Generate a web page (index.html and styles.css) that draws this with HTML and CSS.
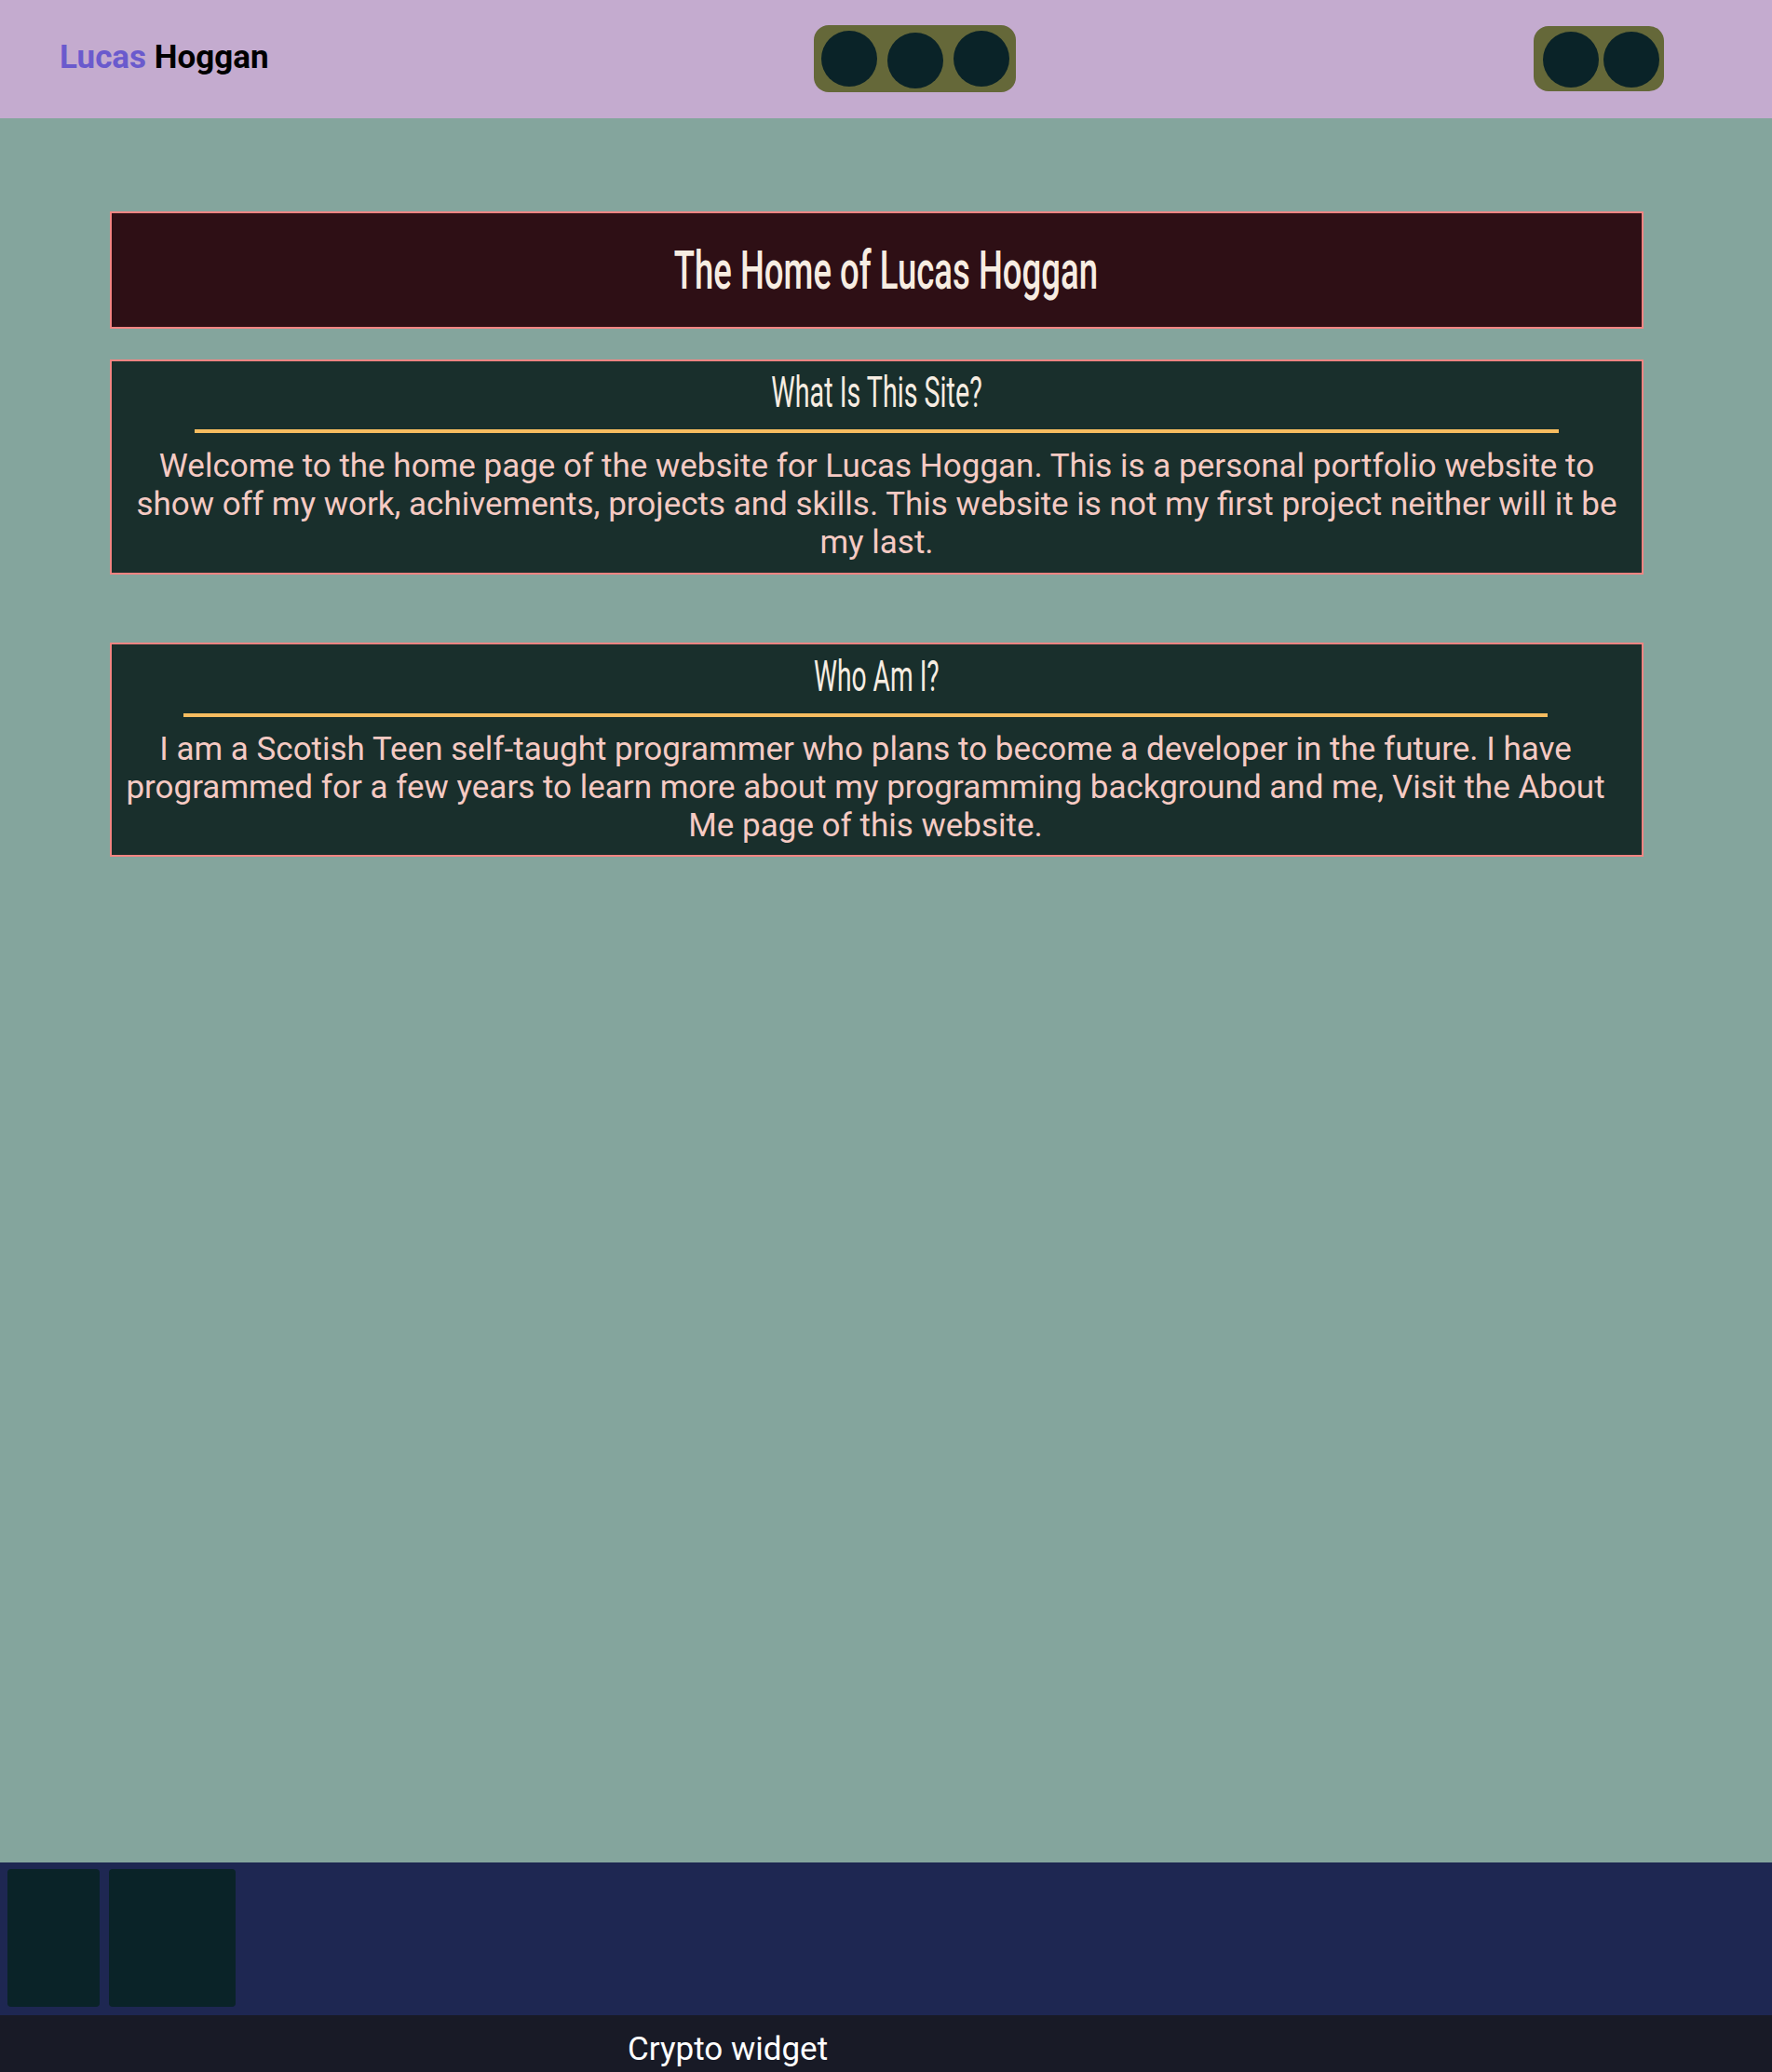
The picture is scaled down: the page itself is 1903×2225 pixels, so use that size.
FILE: index.html
```html
<!DOCTYPE html>
<html lang="en">
<head>
<meta charset="utf-8">
<title>Lucas Hoggan</title>
<link rel="stylesheet" href="styles.css">
</head>
<body>
<header class="site-header">
  <div class="logo"><span class="logo-first">Lucas</span> <span class="logo-last">Hoggan</span></div>
  <nav class="pill pill-nav">
    <span class="dot"></span>
    <span class="dot dot-low"></span>
    <span class="dot"></span>
  </nav>
  <div class="pill pill-social">
    <span class="dot"></span>
    <span class="dot"></span>
  </div>
</header>
<main class="main">
  <div class="title-box"><h1 class="title"><span class="cond">The Home of Lucas Hoggan</span></h1></div>
  <section class="card card-site">
    <h2 class="card-heading"><span class="cond cond-h1">What Is This Site?</span></h2>
    <div class="card-body">
      <hr class="rule">
      <p class="card-text">Welcome to the home page of the website for Lucas Hoggan. This is a personal portfolio website to show off my work, achivements, projects and skills. This website is not my first project neither will it be my last.</p>
    </div>
  </section>
  <section class="card card-me">
    <h2 class="card-heading"><span class="cond cond-h2">Who Am I?</span></h2>
    <div class="card-body">
      <hr class="rule">
      <p class="card-text">I am a Scotish Teen self-taught programmer who plans to become a developer in the future. I have programmed for a few years to learn more about my programming background and me, Visit the About Me page of this website.</p>
    </div>
  </section>
</main>
<footer class="site-footer">
  <div class="widgets">
    <div class="widget widget-a"></div>
    <div class="widget widget-b"></div>
  </div>
  <div class="crypto">Crypto widget</div>
</footer>
</body>
</html>
```
FILE: styles.css
```css
* { box-sizing: border-box; }
html, body { margin: 0; padding: 0; }
body {
  background: #84a59d;
  font-family: Roboto, "Noto Sans", Arial, sans-serif;
}

.site-header {
  height: 127px;
  background: #c4abcf;
  display: flex;
  align-items: flex-start;
  padding-left: 64px;
}
.logo {
  width: 223px;
  margin-top: 42px;
  font-size: 35px;
  font-weight: 700;
  line-height: 40px;
  white-space: nowrap;
}
.logo-first { color: #6a5acd; }
.logo-last { color: #000; }

.pill {
  background: #656839;
  border-radius: 16px;
  display: flex;
  align-items: flex-start;
}
.pill-nav {
  margin-left: 587px;
  margin-top: 27px;
  height: 72px;
  padding: 6px 7px 0 8px;
  gap: 11px;
}
.pill-social {
  margin-left: 556px;
  margin-top: 28px;
  height: 70px;
  padding: 6px 5px 0 10px;
  gap: 5px;
}
.dot {
  width: 60px;
  height: 60px;
  border-radius: 50%;
  background: #0a2328;
  flex: none;
}
.dot-low { margin-top: 2px; }

.main {
  height: 1873px;
  padding: 100px 138px 0 118px;
}

.title-box {
  height: 126px;
  background: #2e0f15;
  border: 2px solid #f28482;
  display: flex;
  align-items: center;
  justify-content: center;
  padding-left: 20px;
}
.title {
  margin: 0;
  font-size: 58px;
  font-weight: 500;
  line-height: 1;
  color: #f7ede2;
}
.cond {
  display: inline-block;
  transform: scaleX(0.63);
  transform-origin: center;
  white-space: nowrap;
}
.cond-h1 { transform: scaleX(0.61); }
.cond-h2 { transform: scaleX(0.6); }

.card {
  background: #192f2c;
  border: 2px solid #f28482;
  text-align: center;
}
.card-site { margin-top: 33px; height: 231px; }
.card-me { margin-top: 73px; height: 230px; }

.card-heading {
  margin: 0;
  padding-top: 7px;
  font-size: 47px;
  font-weight: 400;
  line-height: 52px;
  color: #f7ede2;
}
.card-me .card-heading { padding-top: 8px; }
.card-body { padding: 0 20px; }
.card-me .card-body { padding: 0 32px 0 8px; }

.rule {
  width: 1465px;
  height: 4px;
  margin: 14px auto 0;
  border: 0;
  background: #f6bd60;
}
.card-text {
  margin: 15px 0 0;
  font-size: 35px;
  line-height: 41px;
  color: #f5cac3;
}
.card-me .card-text { margin-top: 14px; }

.site-footer { background: #181a26; }
.widgets {
  height: 164px;
  background: #1e2752;
  display: flex;
  gap: 10px;
  padding: 7px 8px 9px;
}
.widget {
  background: #0a2328;
  border-radius: 4px;
}
.widget-a { width: 99px; }
.widget-b { width: 136px; }
.crypto {
  height: 61px;
  padding: 17px 0 0 674px;
  font-size: 35px;
  line-height: 40px;
  color: #fff;
}
```
